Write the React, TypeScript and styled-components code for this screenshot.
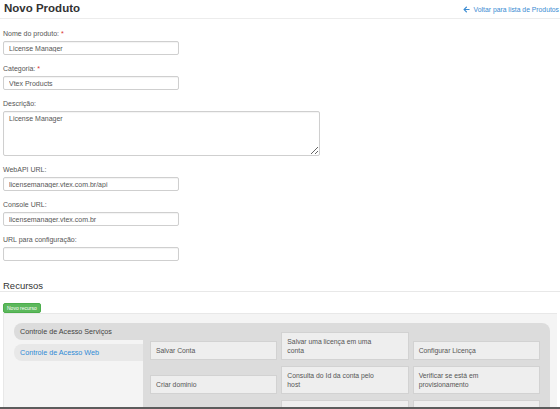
import React from 'react';
import styled, { createGlobalStyle } from 'styled-components';
import { FaArrowLeft } from 'react-icons/fa';

const GlobalStyle = createGlobalStyle`
  html, body {
    margin: 0;
    padding: 0;
    background: #ffffff;
    overflow: hidden;
  }
  body {
    font-family: 'Liberation Sans', Arial, sans-serif;
    color: #444;
  }
  * {
    box-sizing: border-box;
  }
`;

const fields = [
  { label: 'Nome do produto:', required: true, value: 'License Manager' },
  { label: 'Categoria:', required: true, value: 'Vtex Products' },
  { label: 'Descrição:', required: false, value: 'License Manager', multiline: true },
  { label: 'WebAPI URL:', required: false, value: 'licensemanager.vtex.com.br/api' },
  { label: 'Console URL:', required: false, value: 'licensemanager.vtex.com.br' },
  { label: 'URL para configuração:', required: false, value: '' },
];

const tabs = [
  { name: 'Controle de Acesso Serviços', active: true },
  { name: 'Controle de Acesso Web', active: false },
];

// resources of the active tab, row by row
const resources = [
  'Salvar Conta',
  'Salvar uma licença em uma conta',
  'Configurar Licença',
  'Criar dominio',
  'Consulta do Id da conta pelo host',
  'Verificar se está em provisionamento',
  'Atualizar Conta',
  'Consulta conta por identificador',
  'Consultar todas as contas ativas',
];

const App = () => {
  return (
    <Page>
      <GlobalStyle />
      <Header>
        <Title>Novo Produto</Title>
        <BackLink href="#">
          <FaArrowLeft size={7} />
          Voltar para lista de Produtos
        </BackLink>
      </Header>

      <Form>
        {fields.map((field) => (
          <Field key={field.label}>
            <Label>
              {field.label}
              {field.required && <Required> *</Required>}
            </Label>
            {field.multiline ? (
              <TextArea defaultValue={field.value} />
            ) : (
              <Input defaultValue={field.value} />
            )}
          </Field>
        ))}
      </Form>

      <SectionTitle>Recursos</SectionTitle>
      <Toolbar>
        <GreenButton type="button">Novo recurso</GreenButton>
      </Toolbar>

      <Panel>
        <TabsLayout>
          <TabList>
            {tabs.map((tab) => (
              <Tab key={tab.name} $active={tab.active}>
                {tab.name}
              </Tab>
            ))}
          </TabList>
          <Pane>
            <CardGrid>
              {resources.map((item) => (
                <Card key={item}>{item}</Card>
              ))}
            </CardGrid>
          </Pane>
        </TabsLayout>
      </Panel>
      <BottomEdge />
    </Page>
  );
};

export default App;

const Page = styled.div`
  width: 560px;
  height: 409px;
  overflow: hidden;
`;

const Header = styled.div`
  display: flex;
  align-items: center;
  justify-content: space-between;
  height: 19px;
  padding-left: 4px;
  border-bottom: 1px solid #ececec;
`;

const Title = styled.h1`
  margin: 0;
  font-size: 11.5px;
  line-height: 17px;
  font-weight: 700;
  color: #333;
  align-self: flex-start;
`;

const BackLink = styled.a`
  display: flex;
  align-items: center;
  gap: 4px;
  font-size: 6.8px;
  color: #3a8bd2;
  text-decoration: none;
  white-space: nowrap;
  margin-right: 1px;
  svg {
    color: #3a8bd2;
  }
`;

const Form = styled.form`
  padding: 10px 3px 0;
  display: flex;
  flex-direction: column;
`;

const Field = styled.div`
  display: flex;
  flex-direction: column;
  margin-bottom: 9px;
`;

const Label = styled.label`
  font-size: 7px;
  line-height: 9px;
  margin-bottom: 3px;
  color: #555;
`;

const Required = styled.span`
  color: #d9302c;
`;

const Input = styled.input`
  width: 176px;
  height: 14px;
  padding: 0 5px;
  font-family: 'Liberation Sans', Arial, sans-serif;
  font-size: 7px;
  color: #555;
  border: 1px solid #cfcfcf;
  border-radius: 2px;
  box-shadow: inset 0 1px 1px rgba(0, 0, 0, 0.05);
  outline: none;
`;

const TextArea = styled.textarea`
  width: 317px;
  height: 45px;
  padding: 3px 5px;
  font-family: 'Liberation Sans', Arial, sans-serif;
  font-size: 7px;
  color: #555;
  border: 1px solid #cfcfcf;
  border-radius: 2px;
  box-shadow: inset 0 1px 1px rgba(0, 0, 0, 0.05);
  outline: none;
`;

const SectionTitle = styled.h2`
  margin: 10px 0 0;
  padding-left: 3px;
  font-size: 9.5px;
  line-height: 11px;
  font-weight: 400;
  color: #333;
  border-bottom: 1px solid #e8e8e8;
`;

const Toolbar = styled.div`
  display: flex;
  padding: 11px 3px 0;
`;

const GreenButton = styled.button`
  height: 10px;
  padding: 0 3px;
  font-family: 'Liberation Sans', Arial, sans-serif;
  font-size: 5px;
  line-height: 8px;
  color: #fff;
  background: #5cb85c;
  border: 1px solid #4cae4c;
  border-radius: 2px;
  cursor: pointer;
`;

const Panel = styled.div`
  margin: 0 3px;
  padding: 9px 7px 0 10px;
  background: #f4f4f4;
  border-top: 1px solid #e8e8e8;
  border-left: 1px solid #e8e8e8;
`;

const TabsLayout = styled.div`
  display: grid;
  grid-template-columns: 129px 1fr;
`;

const TabList = styled.div`
  display: flex;
  flex-direction: column;
  gap: 4px;
`;

const Tab = styled.div<{ $active: boolean }>`
  height: 17px;
  line-height: 17px;
  padding-left: 6px;
  font-size: 7.2px;
  white-space: nowrap;
  border-radius: 8px 0 0 8px;
  color: ${(p) => (p.$active ? '#444' : '#2f8ad6')};
  background: ${(p) => (p.$active ? '#dcdcdc' : '#e8e8e8')};
`;

const Pane = styled.div`
  background: #dcdcdc;
  border-top-right-radius: 8px;
  padding: 9px 10px 20px 7px;
  min-height: 100px;
`;

const CardGrid = styled.div`
  display: grid;
  grid-template-columns: repeat(3, 1fr);
  column-gap: 4px;
  row-gap: 6px;
  align-items: end;
`;

const Card = styled.div`
  padding: 4px 30px 4px 5px;
  font-size: 6.8px;
  line-height: 9px;
  color: #555;
  background: #eeeeee;
  border: 1px solid #d2d2d2;
`;

const BottomEdge = styled.div`
  position: fixed;
  left: 0;
  right: 0;
  bottom: 0;
  height: 2px;
  background: #5c5c5c;
`;
